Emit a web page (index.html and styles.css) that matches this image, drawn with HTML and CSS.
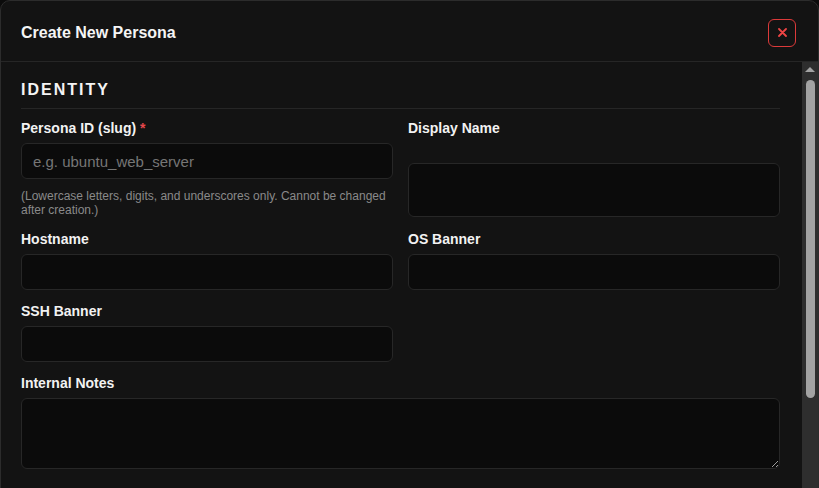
FILE: index.html
```html
<!DOCTYPE html>
<html lang="en">
<head>
    <meta charset="UTF-8">
    <meta name="viewport" content="width=device-width, initial-scale=1.0">
    <title>Create New Persona</title>
    <link rel="stylesheet" href="styles.css">
</head>
<body>
    <div class="modal">
        <div class="modal-header">
            <h2>Create New Persona</h2>
            <button class="close-btn" aria-label="Close">
                <svg width="9" height="9" viewBox="0 0 9 9">
                    <path d="M1 1 L8 8 M8 1 L1 8" stroke="#ef4444" stroke-width="1.8" stroke-linecap="round" fill="none"/>
                </svg>
            </button>
        </div>

        <div class="modal-main">
            <div class="modal-body">
                <h3 class="section-title">Identity</h3>
                <div class="form-grid">
                    <div class="field">
                        <label>Persona ID (slug) <span class="req">*</span></label>
                        <input type="text" placeholder="e.g. ubuntu_web_server">
                        <p class="hint">(Lowercase letters, digits, and underscores only. Cannot be changed after creation.)</p>
                    </div>
                    <div class="field tall">
                        <label>Display Name</label>
                        <input type="text">
                    </div>
                    <div class="field">
                        <label>Hostname</label>
                        <input type="text">
                    </div>
                    <div class="field">
                        <label>OS Banner</label>
                        <input type="text">
                    </div>
                    <div class="field">
                        <label>SSH Banner</label>
                        <input type="text">
                    </div>
                    <div class="field"></div>
                    <div class="field wide">
                        <label>Internal Notes</label>
                        <textarea></textarea>
                    </div>
                </div>
            </div>

            <!-- scrollbar drawn by hand, headless hides the native one -->
            <div class="scrollbar">
                <div class="scroll-arrow"></div>
                <div class="scroll-thumb"></div>
            </div>
        </div>
    </div>
</body>
</html>
```

FILE: styles.css
```css
* {
    margin: 0;
    padding: 0;
    box-sizing: border-box;
}

body {
    background-color: #0b0b0b;
    font-family: "Liberation Sans", Arial, sans-serif;
    color: #f2f2f2;
    overflow: hidden;
}

.modal {
    width: 819px;
    height: 560px;
    background-color: #131313;
    border: 1px solid #2c2c2c;
    border-radius: 10px;
    display: flex;
    flex-direction: column;
    overflow: hidden;
}

.modal-header {
    height: 61px;
    flex-shrink: 0;
    display: flex;
    align-items: center;
    justify-content: space-between;
    padding: 3px 22px 0 20px;
    border-bottom: 1px solid #262626;
}

.modal-header h2 {
    font-size: 16px;
    font-weight: bold;
    color: #f5f5f5;
}

.close-btn {
    width: 28px;
    height: 28px;
    background: transparent;
    border: 1px solid #dc3a3a;
    border-radius: 6px;
    display: flex;
    align-items: center;
    justify-content: center;
    cursor: pointer;
}

.modal-main {
    flex: 1;
    display: flex;
    min-height: 0;
}

.modal-body {
    flex: 1;
    overflow: hidden;
    padding: 19px 22px 30px 20px;
}

.scrollbar {
    width: 16px;
    flex-shrink: 0;
    background-color: #2e2e2e;
    display: flex;
    flex-direction: column;
    align-items: center;
    padding-top: 5px;
}

.scroll-arrow {
    width: 0;
    height: 0;
    border-left: 5px solid transparent;
    border-right: 5px solid transparent;
    border-bottom: 5px solid #a3a3a3;
}

.scroll-thumb {
    width: 9px;
    height: 318px;
    margin-top: 8px;
    background-color: #a3a3a3;
    border-radius: 5px;
}

.section-title {
    font-size: 16px;
    font-weight: bold;
    letter-spacing: 2px;
    text-transform: uppercase;
    color: #f5f5f5;
    line-height: 18px;
    padding-bottom: 9px;
    border-bottom: 1px solid #262626;
    margin-bottom: 11px;
}

.form-grid {
    display: grid;
    grid-template-columns: 1fr 1fr;
    column-gap: 15px;
    row-gap: 13px;
}

.field {
    display: flex;
    flex-direction: column;
}

.field.wide {
    grid-column: 1 / 3;
}

.field label {
    font-size: 14px;
    font-weight: bold;
    line-height: 17px;
    margin-bottom: 6px;
    color: #f2f2f2;
}

.req {
    color: #e5484d;
}

.field input,
.field textarea {
    width: 100%;
    height: 36px;
    background-color: #0b0b0b;
    border: 1px solid #272727;
    border-radius: 6px;
    padding: 0 11px;
    font-family: "Liberation Sans", Arial, sans-serif;
    font-size: 15px;
    color: #eee;
    outline: none;
}

.field input::placeholder {
    color: #767676;
}

.field.tall input {
    height: 54px;
    margin-top: auto;
    margin-bottom: 1px;
}

.field textarea {
    height: 71px;
    padding: 8px 11px;
    resize: vertical;
}

.hint {
    font-size: 12px;
    line-height: 14px;
    color: #8a8a8a;
    margin-top: 10px;
    padding-bottom: 1px;
}
```
